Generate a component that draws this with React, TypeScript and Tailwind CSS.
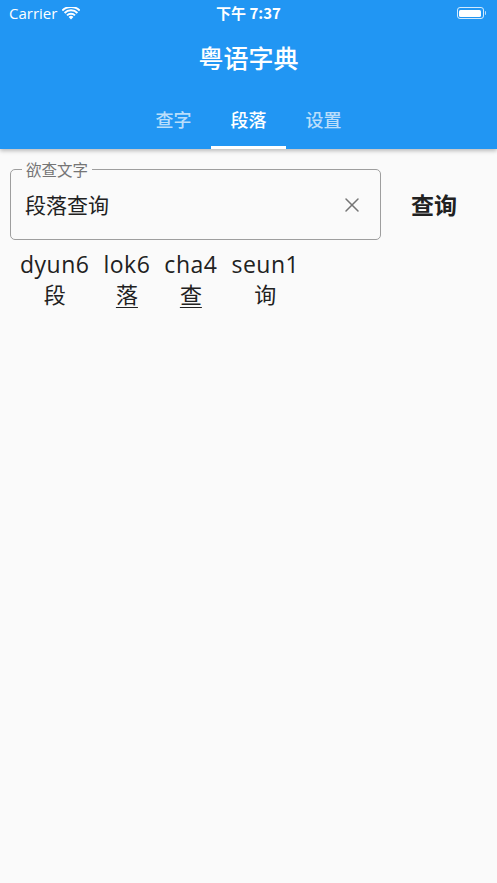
import { X } from 'lucide-react';

const cjk = { fontFamily: '"Noto Sans CJK SC", "Noto Sans", sans-serif' };

const words = [
  { py: 'dyun6', zi: '段', line: false },
  { py: 'lok6', zi: '落', line: true },
  { py: 'cha4', zi: '查', line: true },
  { py: 'seun1', zi: '询', line: false },
];

function StatusBar() {
  return (
    <div className="flex h-[26px] items-center justify-between px-[9px] text-white">
      <div className="flex w-[120px] items-center gap-[5px] text-[15px]" style={{ fontFamily: '"Open Sans", sans-serif' }}>
        <span>Carrier</span>
        <svg width="18" height="13" viewBox="0 0 18 13" fill="white">
          <path d="M9 12.5 L6.6 10 A3.4 3.4 0 0 1 11.4 10 Z" />
          <path d="M4.3 7.7 A6.6 6.6 0 0 1 13.7 7.7 L12.3 9.1 A4.6 4.6 0 0 0 5.7 9.1 Z" />
          <path d="M1.9 5.3 A10 10 0 0 1 16.1 5.3 L14.7 6.7 A8 8 0 0 0 3.3 6.7 Z" />
          <path d="M-0.4 2.9 A13.3 13.3 0 0 1 18.4 2.9 L17 4.3 A11.3 11.3 0 0 0 1 4.3 Z" />
        </svg>
      </div>
      <div className="text-[15px] font-semibold" style={cjk}>下午 7:37</div>
      <div className="flex w-[120px] justify-end pr-[2px]">
        <div className="flex items-center">
          <div className="h-[12px] w-[27px] rounded-[3px] border border-white/80 p-[1.5px]">
            <div className="h-full w-full rounded-[1.5px] bg-white" />
          </div>
          <div className="ml-[1px] h-[4px] w-[1.5px] rounded-r-sm bg-white/70" />
        </div>
      </div>
    </div>
  );
}

export default function App() {
  return (
    <div className="min-h-[883px] bg-[#fafafa]" style={cjk}>
      <header className="bg-[#2196f3] shadow-[0_2px_4px_rgba(0,0,0,0.25)]">
        <StatusBar />
        <h1 className="flex h-[64px] items-center justify-center text-[25px] font-medium text-white">
          粤语字典
        </h1>
        <nav className="flex justify-center">
          {['查字', '段落', '设置'].map((t, i) => (
            <div
              key={t}
              className={`flex h-[59px] w-[75px] items-center justify-center text-[18px] font-medium ${
                i === 1 ? 'border-b-[3px] border-white pt-[3px] text-white' : 'text-white/70'
              }`}
            >
              {t}
            </div>
          ))}
        </nav>
      </header>

      <main className="px-[10px] pt-[20px]">
        <div className="flex items-center">
          <div className="relative flex h-[71px] w-[371px] items-center justify-between rounded-[5px] border border-[#9e9e9e] pl-[14px] pr-[16px]">
            <span className="absolute left-[11px] top-[-11px] bg-[#fafafa] px-[4px] text-[15.5px] leading-[20px] text-[#757575]">
              欲查文字
            </span>
            <span className="text-[21px] text-[#212121]">段落查询</span>
            <X size={24} strokeWidth={1.5} className="text-[#757575]" />
          </div>
          <button className="ml-[30px] text-[23px] font-semibold text-[#212121]">查询</button>
        </div>

        <div className="mt-[11px] flex gap-[14px] pl-[10px]">
          {words.map(w => (
            <div key={w.py} className="flex flex-col items-center text-[#212121]">
              <span className="text-[23px] leading-[27px] tracking-[0.5px]" style={{ fontFamily: '"Open Sans", sans-serif' }}>
                {w.py}
              </span>
              <span className={`text-[22px] leading-[30px] ${w.line ? 'underline decoration-1 underline-offset-[4px]' : ''}`}>
                {w.zi}
              </span>
            </div>
          ))}
        </div>
      </main>
    </div>
  );
}
